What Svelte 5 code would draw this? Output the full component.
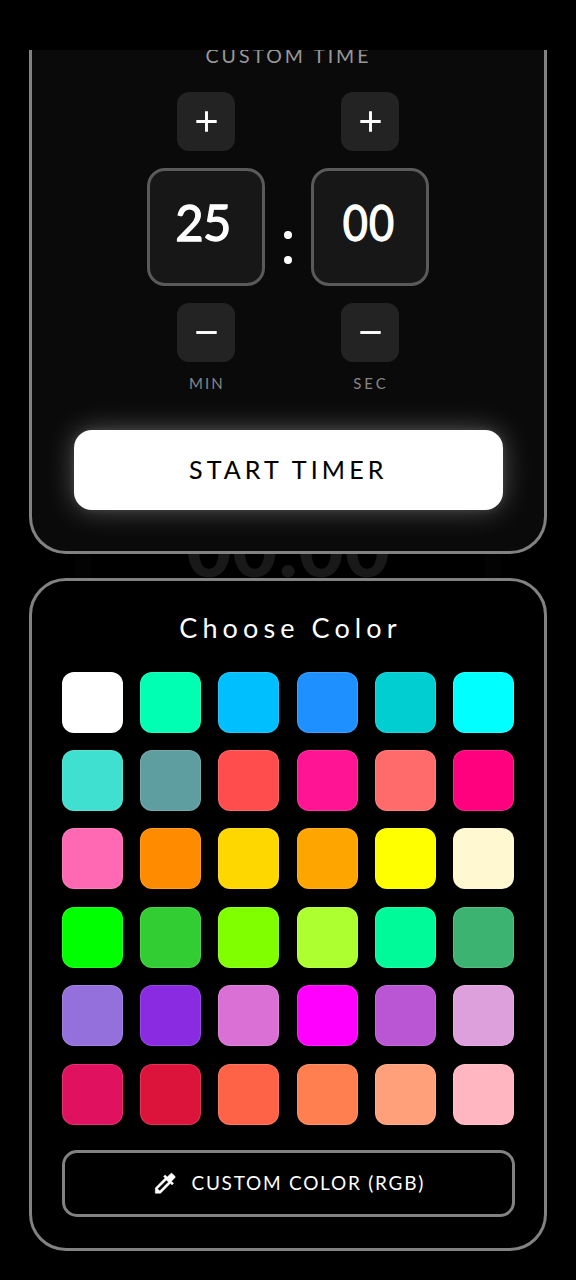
<script>
  const colors = [
    '#ffffff', '#00ffb3', '#00bfff', '#1e90ff', '#00ced1', '#00ffff',
    '#40e0d0', '#5f9ea0', '#ff4d4d', '#ff1493', '#ff6b6b', '#ff007f',
    '#ff69b4', '#ff8c00', '#ffd700', '#ffa500', '#ffff00', '#fff8d0',
    '#00ff00', '#32cd32', '#7fff00', '#adff2f', '#00fa9a', '#3cb371',
    '#9370db', '#8a2be2', '#da70d6', '#ff00ff', '#ba55d3', '#dda0dd',
    '#e0115f', '#dc143c', '#ff6347', '#ff7f50', '#ffa07a', '#ffb6c1'
  ];
  let minutes = $state(25);
  let seconds = $state(0);
  const pad = (n) => String(n).padStart(2, '0');
  const minus = () => (minutes = Math.max(0, minutes - 1));
  const secMinus = () => (seconds = Math.max(0, seconds - 1));
</script>

{#snippet stepIcon(plus)}
  <svg width="35" height="35" viewBox="0 0 24 24" fill="#fff">
    <path d={plus ? 'M19 13h-6v6h-2v-6H5v-2h6V5h2v6h6v2z' : 'M19 13H5v-2h14v2z'} />
  </svg>
{/snippet}

<main class="screen">
  <div class="backdrop"><span>00:00</span></div>

  <section class="panel timer">
    <h2><span>CUSTOM TIME</span></h2>
    <div class="pickers">
      <div class="picker">
        <button class="step" aria-label="+" onclick={() => minutes++}>{@render stepIcon(true)}</button>
        <div class="value"><span>{pad(minutes)}</span></div>
        <button class="step" aria-label="-" onclick={minus}>{@render stepIcon(false)}</button>
        <div class="unit">MIN</div>
      </div>
      <div class="colon"><i></i><i></i></div>
      <div class="picker">
        <button class="step" aria-label="+" onclick={() => seconds++}>{@render stepIcon(true)}</button>
        <div class="value zero"><span>{pad(seconds)}</span></div>
        <button class="step" aria-label="-" onclick={secMinus}>{@render stepIcon(false)}</button>
        <div class="unit sec">SEC</div>
      </div>
    </div>
    <button class="start"><span>START TIMER</span></button>
  </section>

  <section class="panel palette">
    <h3><span>Choose Color</span></h3>
    <div class="grid">
      {#each colors as color}
        <button class="swatch" aria-label={color} style:background-color={color}></button>
      {/each}
    </div>
    <button class="custom">
      <svg width="26.5" height="26.5" viewBox="0 0 24 24" fill="#fff">
        <path stroke="#fff" stroke-width=".5" d="M20.71 5.63l-2.34-2.34c-.39-.39-1.02-.39-1.41 0l-3.12 3.12-1.93-1.91-1.41 1.41 1.42 1.42L3 16.25V21h4.75l8.92-8.92 1.42 1.42 1.41-1.41-1.92-1.92 3.12-3.12c.4-.4.4-1.03.01-1.42zM6.92 19L5 17.08l8.06-8.06 1.92 1.92L6.92 19z" />
      </svg>
      <span>CUSTOM COLOR (RGB)</span>
    </button>
  </section>
</main>

<style>
  :global(body) { margin: 0; background: #000; }
  * { box-sizing: border-box; }
  button { border: 0; padding: 0; margin: 0; font: inherit; color: inherit; cursor: pointer; }
  svg { display: block; flex: none; }

  .screen {
    position: relative;
    width: 576px;
    height: 1280px;
    padding: 50px 29px 0;
    overflow: hidden;
    background: #000;
    color: #fff;
    font-family: Lato, Quicksand, sans-serif;
    display: flex;
    flex-direction: column;
    gap: 24px;
  }

  .backdrop {
    position: absolute;
    left: 75px;
    top: 150px;
    width: 426px;
    height: 500px;
    border: solid #030303;
    border-width: 0 16px;
    display: flex;
    justify-content: center;
    align-items: flex-end;
    padding-bottom: 53px;
    color: #191919;
    font-size: 79px;
    font-weight: 900;
    line-height: 100px;
  }

  .panel { position: relative; border: 3px solid #828282; flex: none; }

  .timer {
    height: 504px;
    border-top: 0;
    border-radius: 0 0 37px 37px;
    background: #0a0a0a;
    padding: 0 41.5px;
    overflow: hidden;
  }
  h2 {
    height: 49px;
    margin: -7px 0 0;
    line-height: 25px;
    text-align: center;
    font-size: 19.5px;
    font-weight: 400;
    letter-spacing: 2.95px;
    padding-left: 1px;
    color: #999;
  }
  .pickers { display: flex; justify-content: center; gap: 18px; }
  .picker { width: 118px; display: flex; flex-direction: column; align-items: center; }
  .step {
    width: 58.5px;
    height: 58.5px;
    border-radius: 12px;
    background: #232323;
    display: flex;
    align-items: center;
    justify-content: center;
  }
  .value {
    width: 118px;
    height: 117.5px;
    margin: 17.8px 0 17.5px;
    border: 3px solid #5a5a5a;
    border-radius: 18px;
    background: #171717;
    display: flex;
    justify-content: center;
    padding: 20px 5px 0 0;
    font-size: 51px;
    line-height: 62px;
    letter-spacing: -.5px;
    -webkit-text-stroke: 1.3px #fff;
  }
  .value span { transform: scaleX(.96); }
  .value.zero { letter-spacing: 1.5px; padding-right: 1px; }
  .value.zero span { transform: scaleX(.85); }
  .unit {
    margin-top: 11px;
    font-size: 15px;
    line-height: 20px;
    letter-spacing: 2.1px;
    padding-left: 2px;
    color: #858585;
  }
  .unit.sec { letter-spacing: 3px; }
  .colon {
    width: 10px;
    padding-top: 138.5px;
    display: flex;
    flex-direction: column;
    align-items: center;
    gap: 17px;
  }
  .colon i { width: 8px; height: 8px; border-radius: 50%; background: #fff; }
  .start {
    display: block;
    width: 429.5px;
    height: 80px;
    margin: 37.2px auto 0;
    border-radius: 18px;
    background: #fff;
    color: #000;
    box-shadow: 0 0 29px rgba(255, 255, 255, .3), 0 0 8px rgba(255, 255, 255, .1);
    font-size: 25px;
    line-height: 79px;
    padding: 0 0 1px;
    letter-spacing: 4.1px;
    -webkit-text-stroke: .1px #000;
  }

  .palette {
    height: 672.5px;
    border-radius: 37px;
    background: #000;
    padding: 29px 29.5px 0;
  }
  h3 {
    margin: 0;
    height: 61.5px;
    line-height: 36px;
    text-align: center;
    font-size: 27px;
    font-weight: 400;
    letter-spacing: 5.1px;
    padding-left: 5px;
  }
  .grid {
    display: grid;
    grid-template-columns: repeat(6, 61px);
    gap: 17.45px 17.4px;
  }
  .swatch { height: 61px; border-radius: 12px; border: 1px solid rgba(255, 255, 255, .14); background-clip: border-box; }
  .custom {
    width: 453px;
    height: 67.5px;
    margin-top: 25px;
    border: 3px solid #828282;
    border-radius: 15px;
    background: #000;
    display: flex;
    align-items: center;
    justify-content: center;
    gap: 13px;
    padding: 0 1px 0 0;
    font-size: 19px;
    letter-spacing: 1.75px;
  }
  .custom span { padding-bottom: 2px; margin-right: -2px; }
</style>
